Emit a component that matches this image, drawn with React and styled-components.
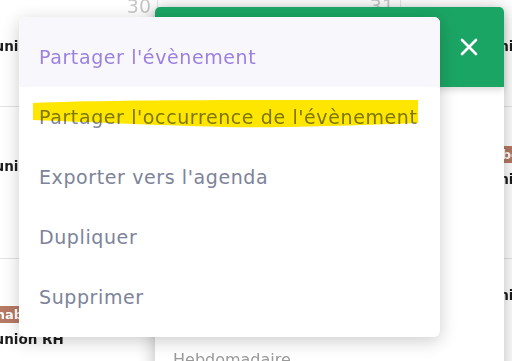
import React from "react";
import styled, { createGlobalStyle } from "styled-components";

const GlobalStyle = createGlobalStyle`
  html, body {
    margin: 0;
    padding: 0;
    background: #ffffff;
  }
  body {
    font-family: "DejaVu Sans", "Noto Sans", sans-serif;
  }
`;

const Page = styled.div`
  position: relative;
  width: 512px;
  height: 361px;
  overflow: hidden;
  background: #ffffff;
`;

/* calendar behind the modal, only a slice of it is in view */
const Calendar = styled.div`
  display: grid;
  grid-template-columns: 243px 243px 243px;
  margin-left: -86px;
  width: 729px;
`;

const Column = styled.div`
  display: flex;
  flex-direction: column;
  border-left: ${(p) => (p.first ? "none" : "1px solid #e6e6e6")};
`;

const DayHead = styled.div`
  height: 22px;
  display: flex;
  justify-content: flex-end;
  align-items: flex-end;
  padding-right: 6px;
  font-size: 19px;
  line-height: 19px;
  color: #c9c9c9;
  margin-top: -6px;
  margin-bottom: 6px;
`;

const Cell = styled.div`
  height: ${(p) => p.h}px;
  box-sizing: border-box;
  border-bottom: ${(p) => (p.last ? "none" : "1px solid #e3e3e3")};
  padding: ${(p) => p.pad || "0"};
  display: flex;
  flex-direction: column;
  align-items: flex-start;
  gap: 8px;
`;

const EventTitle = styled.div`
  font-weight: bold;
  font-size: 13.5px;
  color: #1d1d1d;
  padding-left: ${(p) => p.indent || 61}px;
  white-space: nowrap;
`;

const Badge = styled.span`
  margin-left: ${(p) => p.indent || 60}px;
  background: #b77a64;
  color: #ffffff;
  font-size: 13px;
  font-weight: bold;
  padding: 1px 5px;
  line-height: 15px;
`;

const Modal = styled.div`
  position: absolute;
  left: 155px;
  top: 7px;
  width: 349px;
  height: 400px;
  background: #ffffff;
  border-radius: 5px 5px 0 0;
  box-shadow: 0 2px 18px rgba(0, 0, 0, 0.28);
  display: flex;
  flex-direction: column;
`;

const ModalHeader = styled.div`
  height: 80px;
  background: #1ba564;
  border-radius: 5px 5px 0 0;
  display: flex;
  justify-content: flex-end;
  align-items: center;
  padding-right: 25px;
  box-shadow: 0 3px 6px rgba(0, 0, 0, 0.15);
`;

const CloseButton = styled.button`
  background: none;
  border: none;
  padding: 0;
  width: 20px;
  height: 20px;
  display: flex;
  align-items: center;
  justify-content: center;
  cursor: pointer;
`;

const ModalBody = styled.div`
  padding: 263px 18px 0;
  font-size: 16px;
  color: #9a9a9a;
`;

const Menu = styled.ul`
  position: absolute;
  left: 19px;
  top: 17px;
  width: 421px;
  margin: 0;
  padding: 0 0 10px;
  list-style: none;
  background: #ffffff;
  border-radius: 6px;
  box-shadow: 0 4px 18px rgba(0, 0, 0, 0.2);
  overflow: hidden;
`;

const MenuItem = styled.li`
  position: relative;
  height: 60px;
  padding: ${(p) => (p.active ? "10px" : "0")} 20px 0;
  display: flex;
  align-items: center;
  font-size: 19px;
  letter-spacing: 0.6px;
  color: ${(p) => (p.active ? "#9c80e0" : "#7d8399")};
  background: ${(p) => (p.active ? "#f8f8fc" : "#ffffff")};
  white-space: nowrap;
  cursor: pointer;
`;

const Highlight = styled.svg`
  position: absolute;
  left: 0;
  top: 0;
  width: 421px;
  height: 60px;
  mix-blend-mode: multiply;
  pointer-events: none;
`;

const items = [
  "Partager l'occurrence de l'évènement",
  "Exporter vers l'agenda",
  "Dupliquer",
  "Supprimer",
];

export default function App() {
  return (
    <Page>
      <GlobalStyle />
      <Calendar>
        <Column first>
          <DayHead>30</DayHead>
          <Cell h={85} pad="16px 0 0">
            <EventTitle>Réunion</EventTitle>
          </Cell>
          <Cell h={152} pad="51px 0 0">
            <EventTitle>Réunion</EventTitle>
          </Cell>
          <Cell h={120} pad="47px 0 0" last>
            <Badge indent={58}>Rehab</Badge>
            <EventTitle>Réunion RH</EventTitle>
          </Cell>
        </Column>
        <Column>
          <DayHead>31</DayHead>
          <Cell h={85} />
          <Cell h={152} />
          <Cell h={120} last />
        </Column>
        <Column>
          <DayHead>1</DayHead>
          <Cell h={85} pad="16px 0 0">
            <EventTitle indent={69}>Réunion</EventTitle>
          </Cell>
          <Cell h={152} pad="39px 0 0">
            <Badge indent={76}>Hebdo</Badge>
            <EventTitle indent={69}>Réunion</EventTitle>
          </Cell>
          <Cell h={120} pad="28px 0 0" last>
            <EventTitle indent={69}>Réunion</EventTitle>
          </Cell>
        </Column>
      </Calendar>

      <Modal>
        <ModalHeader>
          <CloseButton aria-label="Fermer">
            <svg width="18" height="18" viewBox="0 0 18 18">
              <path
                d="M2 2 L16 16 M16 2 L2 16"
                stroke="#ffffff"
                strokeWidth="2.6"
                strokeLinecap="round"
              />
            </svg>
          </CloseButton>
        </ModalHeader>
        <ModalBody>Hebdomadaire</ModalBody>
      </Modal>

      <Menu>
        <MenuItem active>Partager l'évènement</MenuItem>
        {items.map((label, i) => (
          <MenuItem key={label}>
            {label}
            {i === 0 && (
              <Highlight viewBox="0 0 421 60">
                <path
                  d="M14 16 C 90 13 200 13 399 13 L 399 36 C 320 39 260 41 205 40 C 130 38 70 35 14 33 Z"
                  fill="#ffe600"
                />
              </Highlight>
            )}
          </MenuItem>
        ))}
      </Menu>
    </Page>
  );
}
